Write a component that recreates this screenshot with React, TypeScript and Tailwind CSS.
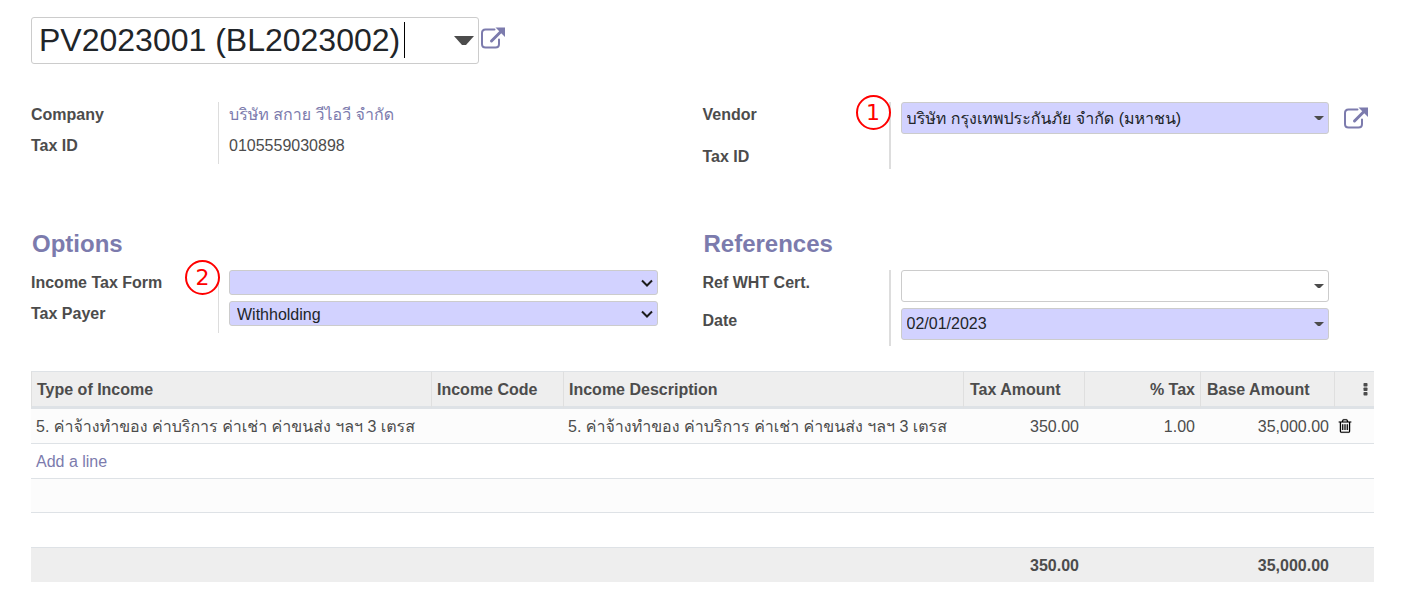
import type { ReactNode } from "react";

function ExternalLinkIcon() {
  return (
    <svg width="26" height="22" viewBox="0 0 26 22" fill="none" aria-hidden="true">
      <path
        d="M14.500 2.500H5.500Q2 2.500 2 6V17Q2 20.500 5.500 20.500H15.500Q19 20.500 19 17V12.500"
        stroke="#7c7bad"
        strokeWidth="2"
        strokeLinecap="round"
      />
      <path d="M11.500 14L21 4.500" stroke="#7c7bad" strokeWidth="3" strokeLinecap="round" />
      <path d="M15.500 0.500H25V10Z" fill="#7c7bad" />
    </svg>
  );
}

function TrashIcon() {
  return (
    <svg width="16" height="16" viewBox="0 0 1792 1792" fill="#000" stroke="#000" strokeWidth="16" aria-hidden="true">
      <path d="M704 736v576q0 14-9 23t-23 9h-64q-14 0-23-9t-9-23v-576q0-14 9-23t23-9h64q14 0 23 9t9 23zm256 0v576q0 14-9 23t-23 9h-64q-14 0-23-9t-9-23v-576q0-14 9-23t23-9h64q14 0 23 9t9 23zm256 0v576q0 14-9 23t-23 9h-64q-14 0-23-9t-9-23v-576q0-14 9-23t23-9h64q14 0 23 9t9 23zm128 724v-948h-896v948q0 22 7 40.5t14.500 27 10.500 8.500h832q3 0 10.500-8.500t14.500-27 7-40.500zm-672-1076h448l-48-117q-7-9-17-11h-317q-10 2-17 11zm928 32v64q0 14-9 23t-23 9h-96v948q0 83-47 143.500t-113 60.500h-832q-66 0-113-58.500t-47-141.500v-952h-96q-14 0-23-9t-9-23v-64q0-14 9-23t23-9h309l70-167q15-37 54-63t79-26h320q40 0 79 26t54 63l70 167h309q14 0 23 9t9 23z" />
    </svg>
  );
}

function Caret() {
  return (
    <svg
      className="pointer-events-none absolute top-1/2 right-[5px] -translate-y-1/2"
      width="10"
      height="4"
      viewBox="0 0 10 4"
      aria-hidden="true"
    >
      <path d="M0 0H10L6 4H4Z" fill="#4c4c4c" />
    </svg>
  );
}

function Combo({ id, value, tone }: { id: string; value: string; tone: string }) {
  return (
    <div className="relative min-w-0 flex-1">
      <input
        id={id}
        type="text"
        defaultValue={value}
        className={`block h-8 w-full rounded-[3px] border border-[#ccc] pr-5 pl-[5px] text-[#212529] outline-none ${tone}`}
      />
      <Caret />
    </div>
  );
}

function Choice({ id, options }: { id: string; options: string[] }) {
  return (
    <div className="relative h-[25px]">
      <select
        id={id}
        className="block h-full w-full appearance-none rounded-[3px] border border-[#ccc] bg-[#d2d2ff] pt-px pl-[7px] text-[#212529] outline-none"
      >
        {options.map((option) => (
          <option key={option}>{option}</option>
        ))}
      </select>
      <svg
        className="pointer-events-none absolute top-1/2 right-[5px] -translate-y-1/2"
        width="12"
        height="8"
        viewBox="0 0 12 8"
        fill="none"
        aria-hidden="true"
      >
        <path d="M1 1.500L6 6.500L11 1.500" stroke="#1c1c1c" strokeWidth="2" />
      </svg>
    </div>
  );
}

function Marker({ place, children }: { place: string; children: ReactNode }) {
  return (
    <span
      className={`absolute -right-[2px] flex size-[35px] items-center justify-center rounded-full border-2 border-[#f00] font-['DejaVu_Sans',sans-serif] text-[22px] leading-none text-[#f00] ${place}`}
    >
      {children}
    </span>
  );
}

const label = "font-bold leading-6";
const heading = "pl-px text-2xl leading-7 font-bold text-[#7c7bad]";
const headCell = "h-[38px] border-t border-b-[3px] border-l border-[#dee2e6] border-l-[#dfdfdf] pt-px font-bold";
const bodyCell = "border-b border-[#dee2e6] px-[5px] pt-px";
const footCell = "h-[35px] border-t border-[#dee2e6] px-[5px] pt-px text-right font-bold";

export default function App() {
  return (
    <main className="min-w-[900px] bg-white pt-[17px] pr-9 pb-[27px] pl-[31px] font-['Liberation_Sans','Loma','Waree','Garuda','Umpush','Noto_Sans_Thai_Looped','Noto_Looped_Thai','Droid_Sans_Thai',sans-serif] text-base leading-6 text-[#4c4c4c]">
      <header className="flex items-center">
        <div className="relative w-[448px]">
          <input
            type="text"
            aria-label="Payment"
            defaultValue="PV2023001 (BL2023002)"
            className="block h-[47px] w-full rounded-[3px] border border-[#ccc] pr-10 pl-[7px] text-[32px] text-[#212529] outline-none"
          />
          <span className="absolute top-[5px] left-[373px] h-9 w-px bg-black" />
          <svg
            className="pointer-events-none absolute top-[19px] right-[5px]"
            width="20"
            height="9"
            viewBox="0 0 20 9"
            aria-hidden="true"
          >
            <path d="M0 0H20L12 9H8Z" fill="#4c4c4c" />
          </svg>
        </div>
        <button type="button" aria-label="Open payment" className="ml-px -mt-1.5">
          <ExternalLinkIcon />
        </button>
      </header>

      <div className="mt-[38px] grid grid-cols-2">
        <section className="grid grid-cols-[187px_1fr] self-start pr-[45px]">
          <div className="space-y-[7px] pt-px">
            <div className={label}>Company</div>
            <div className={label}>Tax ID</div>
          </div>
          <div className="h-[62px] space-y-[7px] border-l border-[#ddd] pt-px pl-[10px]">
            <a href="#company" className="block h-6 text-[#7c7bad]">
              บริษัท สกาย วีไอวี จำกัด
            </a>
            <div>0105559030898</div>
          </div>
        </section>

        <section className="grid grid-cols-[186px_1fr]">
          <div className="relative space-y-[18px] pt-px">
            <label htmlFor="vendor" className={`block ${label}`}>
              Vendor
            </label>
            <div className={label}>Tax ID</div>
            <Marker place="-top-[7px]">1</Marker>
          </div>
          <div className="h-[67px] border-l-2 border-[#ddd] pl-[10px]">
            <div className="flex items-center">
              <Combo id="vendor" value="บริษัท กรุงเทพประกันภัย จำกัด (มหาชน)" tone="bg-[#d2d2ff]" />
              <button type="button" aria-label="Open vendor" className="mr-[5px] ml-[14px]">
                <ExternalLinkIcon />
              </button>
            </div>
          </div>
        </section>
      </div>

      <div className="mt-[43px] grid grid-cols-2">
        <section className="self-start pr-[45px]">
          <h2 className={heading}>Options</h2>
          <div className="mt-3 grid grid-cols-[187px_1fr]">
            <div className="relative space-y-[7px] pt-px">
              <label htmlFor="form" className={`block ${label}`}>
                Income Tax Form
              </label>
              <label htmlFor="payer" className={`block ${label}`}>
                Tax Payer
              </label>
              <Marker place="-top-[10px]">2</Marker>
            </div>
            <div className="h-[63px] space-y-[6px] border-l border-[#ddd] pl-[10px]">
              <Choice id="form" options={[""]} />
              <Choice id="payer" options={["Withholding"]} />
            </div>
          </div>
        </section>

        <section>
          <h2 className={heading}>References</h2>
          <div className="mt-3 grid grid-cols-[186px_1fr]">
            <div className="space-y-[14px] pt-px">
              <label htmlFor="cert" className={`block ${label}`}>
                Ref WHT Cert.
              </label>
              <label htmlFor="date" className={`block ${label}`}>
                Date
              </label>
            </div>
            <div className="h-[76px] space-y-[6px] border-l-2 border-[#ddd] pr-[45px] pl-[10px]">
              <Combo id="cert" value="" tone="bg-white" />
              <Combo id="date" value="02/01/2023" tone="bg-[#d2d2ff]" />
            </div>
          </div>
        </section>
      </div>

      <table className="mt-[25px] w-full table-fixed border-separate border-spacing-0 text-left whitespace-nowrap">
        <colgroup>
          <col />
          <col className="w-[132px]" />
          <col />
          <col className="w-[121px]" />
          <col className="w-[116px]" />
          <col className="w-[134px]" />
          <col className="w-10" />
        </colgroup>
        <thead className="bg-[#eee]">
          <tr>
            <th className={`px-[5px] ${headCell}`}>Type of Income</th>
            <th className={`px-[5px] ${headCell}`}>Income Code</th>
            <th className={`px-[5px] ${headCell}`}>Income Description</th>
            <th className={`px-[6px] ${headCell}`}>Tax Amount</th>
            <th className={`px-[5px] text-right ${headCell}`}>% Tax</th>
            <th className={`px-[6px] ${headCell}`}>Base Amount</th>
            <th className={`px-[6px] ${headCell}`}>
              <button type="button" aria-label="Optional columns" className="ml-auto block">
                <svg width="5" height="14" viewBox="0 0 5 14" fill="#4c4c4c" aria-hidden="true">
                  <rect x="0.500" y="0" width="4" height="3.500" rx="0.800" />
                  <rect x="0.500" y="4.500" width="4" height="3.500" rx="0.800" />
                  <rect x="0.500" y="9" width="4" height="3.500" rx="0.800" />
                </svg>
              </button>
            </th>
          </tr>
        </thead>
        <tbody>
          <tr className="h-[35px] bg-[#fcfcfc]">
            <td className={bodyCell}>5. ค่าจ้างทำของ ค่าบริการ ค่าเช่า ค่าขนส่ง ฯลฯ 3 เตรส</td>
            <td className={bodyCell} />
            <td className={bodyCell}>5. ค่าจ้างทำของ ค่าบริการ ค่าเช่า ค่าขนส่ง ฯลฯ 3 เตรส</td>
            <td className={`text-right ${bodyCell}`}>350.00</td>
            <td className={`text-right ${bodyCell}`}>1.00</td>
            <td className={`text-right ${bodyCell}`}>35,000.00</td>
            <td className="border-b border-[#dee2e6] px-[3px]">
              <button type="button" aria-label="Delete line" className="block">
                <TrashIcon />
              </button>
            </td>
          </tr>
          <tr className="h-[35px]">
            <td colSpan={7} className={bodyCell}>
              <a href="#add" className="text-[#7c7bad]">
                Add a line
              </a>
            </td>
          </tr>
          <tr className="h-[34px] bg-[#fcfcfc]">
            <td colSpan={7} className={bodyCell} />
          </tr>
          <tr className="h-[34px]">
            <td colSpan={7} />
          </tr>
        </tbody>
        <tfoot className="bg-[#eee]">
          <tr>
            <td colSpan={3} className={footCell} />
            <td className={footCell}>350.00</td>
            <td className={footCell} />
            <td className={footCell}>35,000.00</td>
            <td className={footCell} />
          </tr>
        </tfoot>
      </table>
    </main>
  );
}
